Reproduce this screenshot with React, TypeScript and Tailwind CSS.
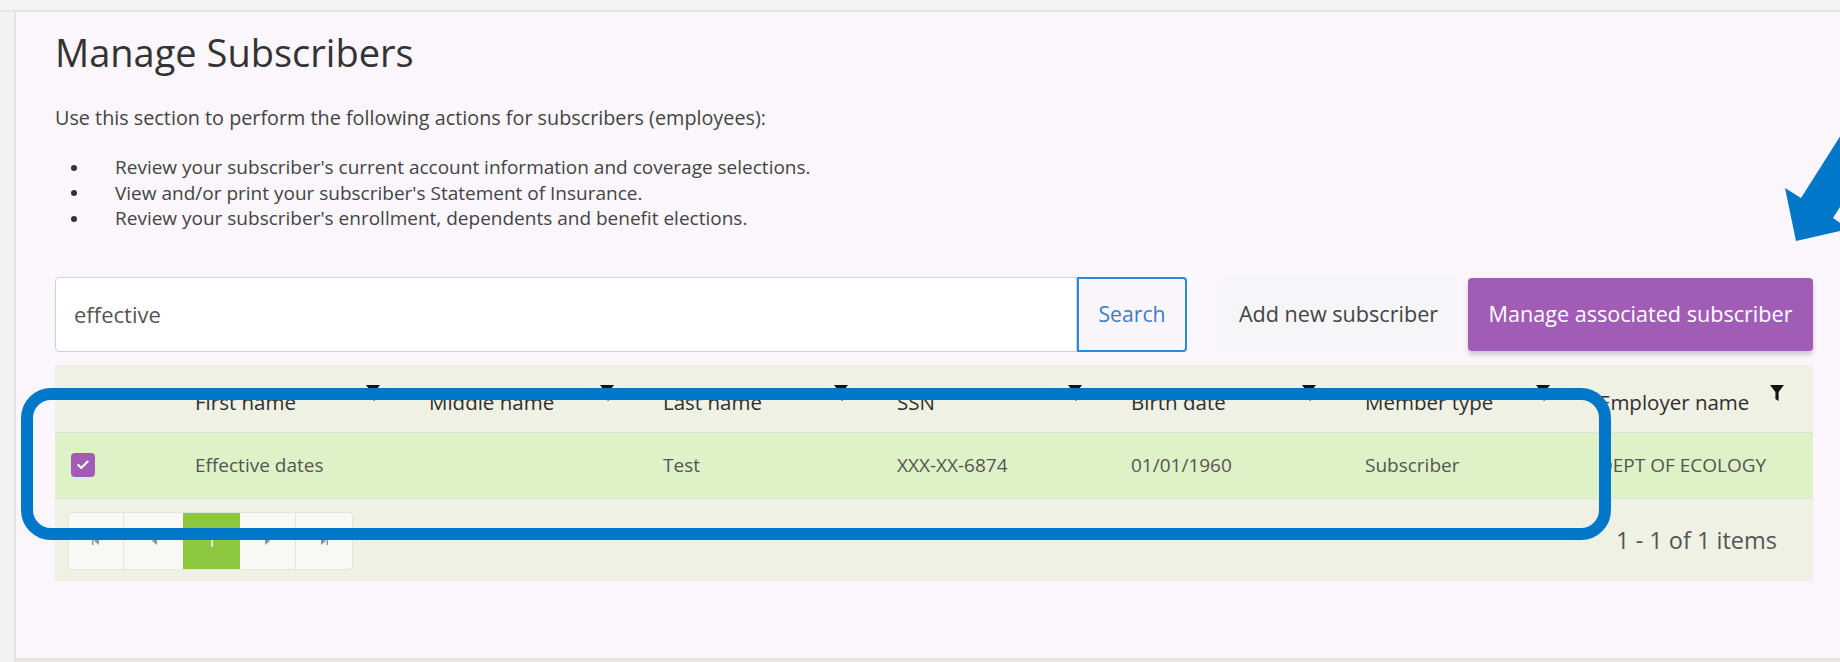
import { Check } from 'lucide-react';

const columns = ['First name', 'Middle name', 'Last name', 'SSN', 'Birth date', 'Member type', 'Employer name'];

const subscriber = ['Effective dates', '', 'Test', 'XXX-XX-6874', '01/01/1960', 'Subscriber', 'DEPT OF ECOLOGY'];

const actions = [
  "Review your subscriber's current account information and coverage selections.",
  "View and/or print your subscriber's Statement of Insurance.",
  "Review your subscriber's enrollment, dependents and benefit elections.",
];

const FilterIcon = () => (
  <svg width="14" height="18" viewBox="0 0 14 18" className="mb-[10px] shrink-0">
    <path d="M0 1h14L8.6 8V17L5.4 15V8Z" fill="#141414" />
  </svg>
);

// kendo-style pager arrows
const PagerArrow = ({ dir, bar }: { dir: 'left' | 'right'; bar?: boolean }) => (
  <svg width="12" height="12" viewBox="0 0 12 12">
    {dir === 'left' ? (
      <>
        <path d="M9 2v8L4 6Z" fill="#8a97a8" />
        {bar && <rect x="2" y="2" width="1.5" height="8" fill="#8a97a8" />}
      </>
    ) : (
      <>
        <path d="M3 2v8l5-4Z" fill="#8a97a8" />
        {bar && <rect x="8.5" y="2" width="1.5" height="8" fill="#8a97a8" />}
      </>
    )}
  </svg>
);

export default function App() {
  return (
    <div className="relative w-[1840px] h-[662px] overflow-hidden bg-[#f2f2f2] font-['Open_Sans',sans-serif]">
      <div className="h-[12px] border-b-2 border-[#e6e6e6] bg-[#f3f3f3]" />
      <div className="ml-[14px] h-[650px] border-l-2 border-[#e4e4e4] border-b-4 border-b-[#e9e5e1] bg-[#faf6fb] pl-[39px] pr-[27px] pt-[16px]">
        <h1 className="text-[38px] leading-[48px] font-normal text-[#333]">Manage Subscribers</h1>

        <p className="mt-[29px] text-[19.8px] leading-[26px] text-[#444]">
          Use this section to perform the following actions for subscribers (employees):
        </p>

        <ul className="mt-[24px] flex flex-col">
          {actions.map((a) => (
            <li key={a} className="flex items-center text-[19px] leading-[25.5px] text-[#444]">
              <span className="ml-[16px] mr-[38px] h-[6px] w-[6px] rounded-full bg-[#333]" />
              {a}
            </li>
          ))}
        </ul>

        <div className="mt-[44px] flex items-center">
          <div className="flex h-[75px] w-[1132px]">
            <div className="flex flex-1 items-center rounded-l-[4px] border border-[#cfd2d8] bg-white pl-[18px] text-[22px] text-[#555]">
              effective
            </div>
            <button className="w-[110px] rounded-r-[4px] border-2 border-[#2d88d6] bg-[#f9f5fb] text-[21.2px] text-[#3a7ec4]">
              Search
            </button>
          </div>
          <button className="ml-[33px] h-[77px] w-[237px] rounded-[4px] bg-[#f6f6f9] text-[21.6px] text-[#444]">
            Add new subscriber
          </button>
          <button className="ml-[11px] h-[73px] flex-1 rounded-[4px] bg-[#a15db5] text-[21.6px] font-medium text-white shadow-[0_4px_5px_rgba(0,0,0,0.18)]">
            Manage associated subscriber
          </button>
        </div>

        <div className="mt-[12px] w-[1758px] bg-[#eef1e4]">
          <div className="grid h-[68px] grid-cols-[120px_repeat(7,234px)] items-center border-b border-[#dde0dd]">
            <div />
            {columns.map((c) => (
              <div key={c} className="flex items-center justify-between pl-[20px] pr-[29px] text-[20.5px] text-[#2f2f2f]">
                <span className="pt-[8px]">{c}</span>
                <FilterIcon />
              </div>
            ))}
          </div>

          <div className="grid h-[66px] grid-cols-[120px_repeat(7,234px)] items-center border-b border-[#dfe2e6] bg-[#dff1c6]">
            <div className="pl-[16px]">
              <div className="flex h-[24px] w-[24px] items-center justify-center rounded-[4px] bg-[#a15db5]">
                <Check size={14} strokeWidth={3.5} color="white" />
              </div>
            </div>
            {subscriber.map((v, i) => (
              <div key={i} className="pl-[20px] text-[19px] text-[#555]">
                {v}
              </div>
            ))}
          </div>

          <div className="flex h-[82px] items-center justify-between pl-[13px] pr-[36px] pt-[3px]">
            <div className="flex h-[58px] overflow-hidden rounded-[4px] border border-[#e3e6df] bg-[#f8f9f5]">
              <div className="flex w-[55px] items-center justify-center border-r border-[#e3e6df]">
                <PagerArrow dir="left" bar />
              </div>
              <div className="flex w-[59px] items-center justify-center">
                <PagerArrow dir="left" />
              </div>
              <div className="flex w-[57px] items-center justify-center bg-[#8dc63f] text-[17px] text-white">1</div>
              <div className="flex w-[56px] items-center justify-center border-r border-[#e3e6df]">
                <PagerArrow dir="right" />
              </div>
              <div className="flex w-[56px] items-center justify-center">
                <PagerArrow dir="right" bar />
              </div>
            </div>
            <span className="text-[23.5px] text-[#555]">1 - 1 of 1 items</span>
          </div>
        </div>
      </div>

      {/* callout box around the result row */}
      <div className="pointer-events-none absolute left-[21px] top-[388px] h-[152px] w-[1590px] rounded-[30px] border-[12px] border-[#0077c8]" />

      {/* callout arrow pointing at the purple button */}
      <svg className="pointer-events-none absolute left-0 top-0" width="1840" height="662">
        <polygon
          points="1796,241 1785,188 1801,198 1908,29 1940,49 1833,218 1849,229"
          fill="#0077c8"
        />
      </svg>
    </div>
  );
}
